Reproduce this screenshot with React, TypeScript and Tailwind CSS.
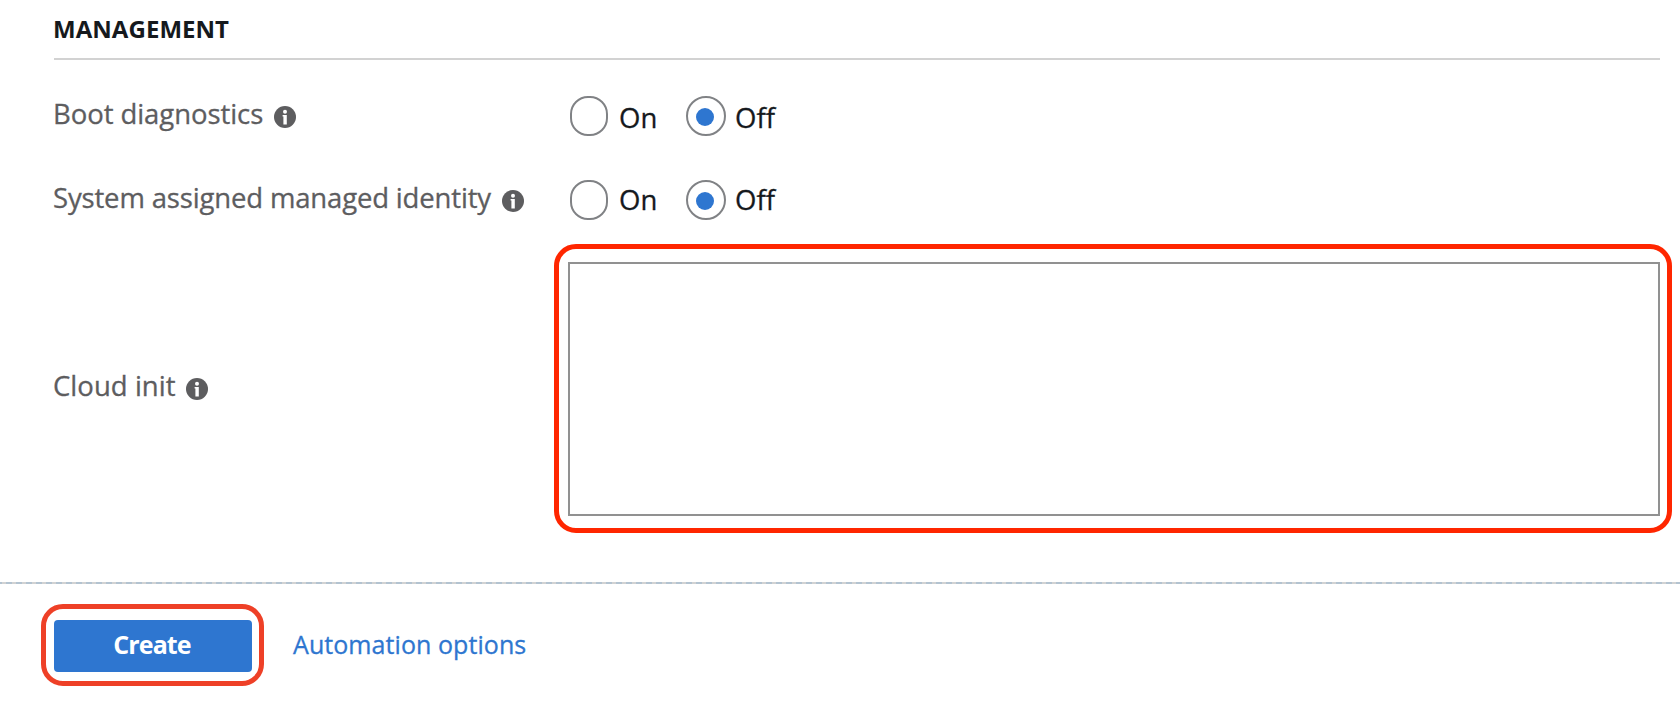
import React from "react";

function InfoIcon() {
  return (
    <svg width="22" height="22" viewBox="0 0 22 22" className="shrink-0">
      <circle cx="11" cy="11" r="11" fill="#5d5d5f" />
      <circle cx="11" cy="5.8" r="2" fill="#fff" />
      <path d="M8.6 9h4.2v9.4H9.4V10.4h-.8z" fill="#fff" />
    </svg>
  );
}

function Label({ text, width, tracking }: { text: string; width: string; tracking: string }) {
  return (
    <div className="flex h-10 items-center text-[#5d5d5f]">
      <span className={`-mt-[5px] shrink-0 whitespace-nowrap text-[27.5px] leading-10 [-webkit-text-stroke:0.3px] ${tracking} ${width}`}>
        <span className="-ml-px">{text}</span>
      </span>
      <span className="mt-0.5">
        <InfoIcon />
      </span>
    </div>
  );
}

function RadioGroup({ textClass }: { textClass: string }) {
  return (
    <div className="flex h-10 text-[27.5px] leading-10 text-[#15191d] [-webkit-text-stroke:0.3px]">
      <span className="h-10 w-[38px] rounded-[18px] border-2 border-[#808285]" />
      <span className={`ml-[11px] w-[67px] ${textClass}`}>On</span>
      <span className="flex size-10 items-center justify-center rounded-full border-2 border-[#808285]">
        <span className="mt-0.5 mr-0.5 size-[18px] rounded-full bg-[#2e76d0]" />
      </span>
      <span className={`ml-[9px] ${textClass}`}>Off</span>
    </div>
  );
}

export default function App() {
  return (
    <div className="flex h-[708px] w-[1680px] flex-col overflow-hidden bg-white font-['Open_Sans','Noto_Sans',sans-serif]">
      <main className="h-[582px] pl-[54px]">
        <h2 className="h-[60px] w-[1606px] border-b-2 border-[#d2d2d2] text-[#15191d]">
          <span className="-ml-px inline-block pt-[13px] text-[24px] leading-8 font-bold tracking-[0.05px]">MANAGEMENT</span>
        </h2>
        <div className="flex h-[84px] pt-9">
          <div className="w-[516px]">
            <Label text="Boot diagnostics" width="w-[220px]" tracking="tracking-[-0.07px]" />
          </div>
          <RadioGroup textClass="pt-0.5" />
        </div>
        <div className="flex h-[100px] pt-9">
          <div className="w-[516px]">
            <Label text="System assigned managed identity" width="w-[448px]" tracking="tracking-[-0.16px]" />
          </div>
          <RadioGroup textClass="pt-0" />
        </div>
        <div className="flex">
          <div className="w-[500px] pt-[124px]">
            <Label text="Cloud init" width="w-[132px]" tracking="tracking-[0.04px]" />
          </div>
          <div className="h-[289px] w-[1118px] rounded-[22px] border-[5px] border-[#ff2600] pt-[13px] pl-[9px]">
            <textarea aria-label="Cloud init" className="block h-[254px] w-[1092px] resize-none border-2 border-[#919191] bg-white outline-none" />
          </div>
        </div>
      </main>
      <footer>
        <div className="h-0.5 bg-[repeating-linear-gradient(90deg,#b3c3d0_0px,#b3c3d0_2px,#d2d2d2_2px,#d2d2d2_6px,#b3c3d0_6px,#b3c3d0_10px)]" />
        <div className="flex items-center pt-5 pl-[41px]">
          <div className="flex h-[82px] w-[223px] rounded-[22px] border-[5px] border-[#ee4027] pt-[11px] pl-2">
            <button className="h-[52px] w-[198px] rounded bg-[#2e76d0] pr-0.5 pb-1 text-center text-[25px] leading-[48px] font-bold tracking-[-0.9px] text-white">Create</button>
          </div>
          <a className="-mt-0.5 ml-[29px] whitespace-nowrap text-[25px] leading-[50px] tracking-[0.07px] text-[#2e76d0] [-webkit-text-stroke:0.3px]">Automation options</a>
        </div>
      </footer>
    </div>
  );
}
